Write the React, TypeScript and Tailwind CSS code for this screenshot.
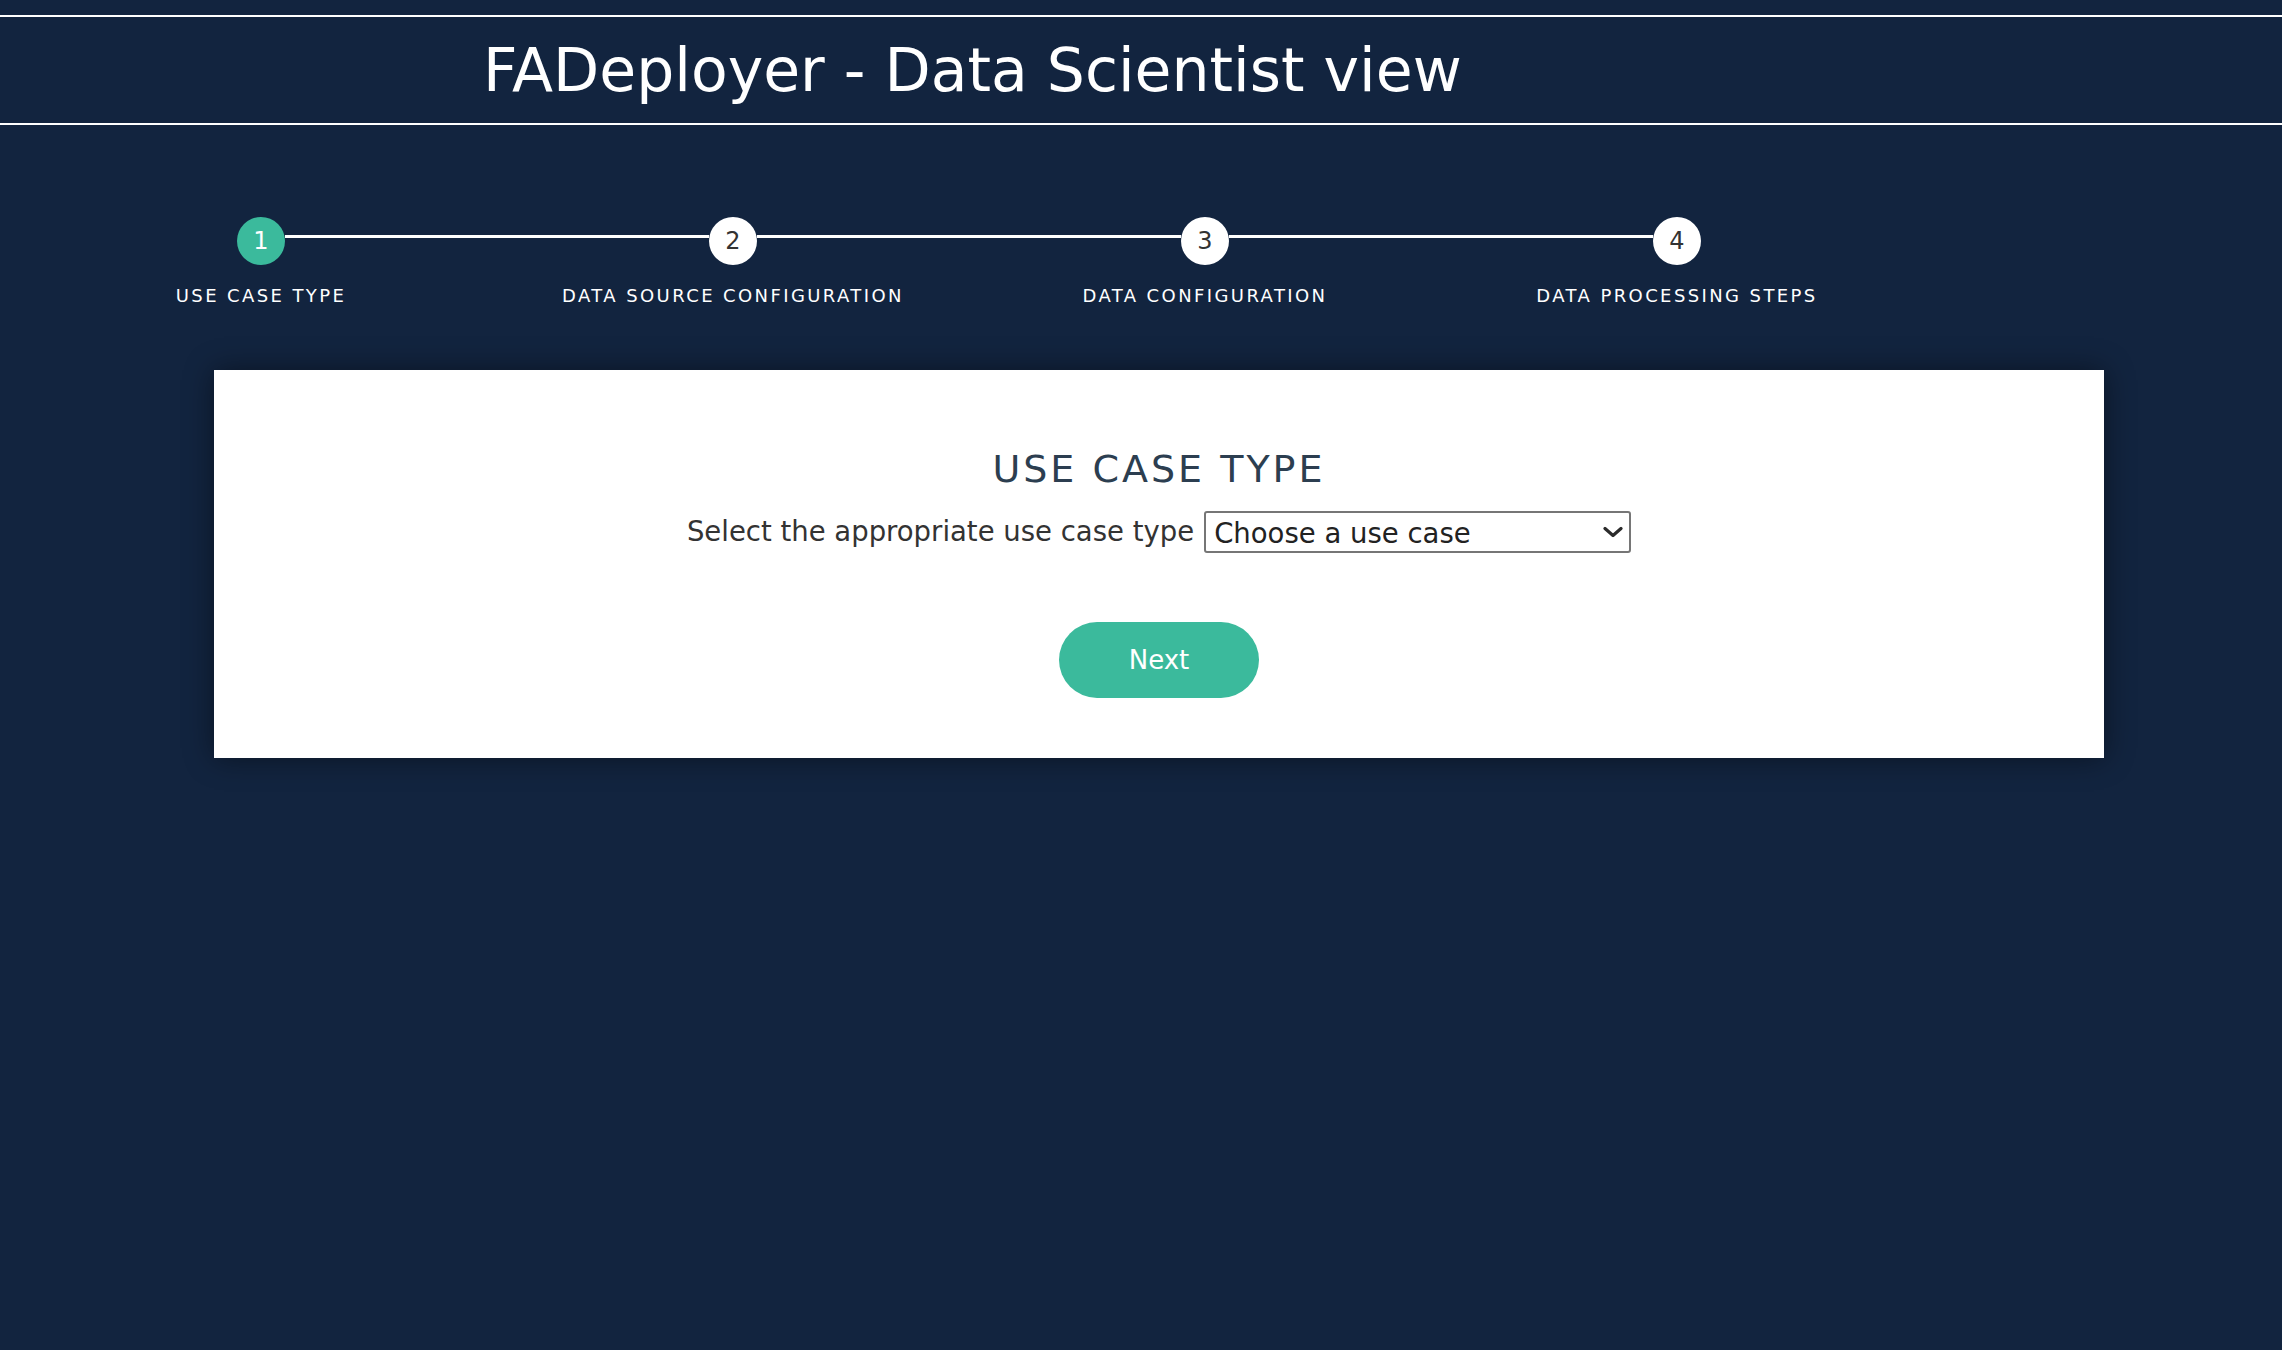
import React from 'react'

const steps = ['USE CASE TYPE', 'DATA SOURCE CONFIGURATION', 'DATA CONFIGURATION', 'DATA PROCESSING STEPS']

const Chevron = () => (
  <svg className="pointer-events-none absolute right-[8px] top-1/2 -translate-y-1/2" width="20" height="11" viewBox="0 0 20 11" fill="none">
    <path d="M2 2l8 7 8-7" stroke="#2b2b2b" strokeWidth="3.2" strokeLinecap="round" strokeLinejoin="round" />
  </svg>
)

const App = () => {
  return (
    <div className="min-h-screen bg-[#12243f] pt-[15px] font-['DejaVu_Sans',sans-serif]">
      <header className="flex h-[110px] items-center border-y-2 border-white pl-[483px]">
        <h1 className="text-[60px] leading-none text-white">FADeployer - Data Scientist view</h1>
      </header>

      {/* stepper */}
      <div className="mt-[92px] flex pl-[25px]">
        {steps.map((s, i) => (
          <div key={s} className="flex w-[472px] flex-col items-center">
            <div className="flex h-[48px] w-full items-start">
              <div className={'mt-[18px] h-[3px] flex-1 ' + (i > 0 ? 'bg-white' : '')}></div>
              <div
                className={
                  'flex h-[48px] w-[48px] items-center justify-center rounded-full text-[24px] ' +
                  (i === 0 ? 'bg-[#3bba9c] text-white' : 'bg-white text-[#333]')
                }
              >
                {i + 1}
              </div>
              <div className={'mt-[18px] h-[3px] flex-1 ' + (i < steps.length - 1 ? 'bg-white' : '')}></div>
            </div>
            <span className="mt-[22px] text-[18px] leading-none tracking-[2.4px] text-white">{s}</span>
          </div>
        ))}
      </div>

      {/* card */}
      <div className="ml-[214px] mt-[65px] flex w-[1890px] flex-col items-center bg-white pb-[60px] pt-[80px] shadow-[0_0_28px_rgba(0,0,0,0.45)]">
        <h2 className="text-[38px] leading-none tracking-[3px] text-[#2c3e50]">USE CASE TYPE</h2>
        <div className="mt-[23px] flex items-center gap-[10px]">
          <label className="text-[27.5px] text-[#333]">Select the appropriate use case type</label>
          <div className="relative">
            <select className="h-[42px] w-[427px] appearance-none rounded-[3px] border-2 border-[#767676] bg-white pl-[8px] text-[27.5px] text-[#222] outline-none">
              <option>Choose a use case</option>
            </select>
            <Chevron />
          </div>
        </div>
        <button className="mt-[69px] h-[76px] w-[200px] rounded-full bg-[#3bba9c] text-[26px] text-white">Next</button>
      </div>
    </div>
  )
}

export default App
